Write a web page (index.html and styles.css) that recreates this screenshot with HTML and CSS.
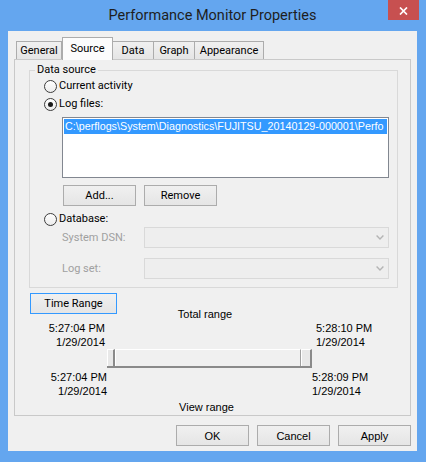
FILE: index.html
```html
<!DOCTYPE html>
<html>
<head>
<meta charset="utf-8">
<link rel="stylesheet" href="styles.css">
</head>
<body>
<div class="window">
  <div class="titlebar">
    <div class="title">Performance Monitor Properties</div>
    <div class="close">
      <svg width="9" height="8" viewBox="0 0 9 8"><path d="M1 0.5L8 7.5M8 0.5L1 7.5" stroke="#fff" stroke-width="1.7" fill="none"/></svg>
    </div>
  </div>
  <div class="client">
    <div class="tabs">
      <div class="tab tab-general">General</div>
      <div class="tab tab-active">Source</div>
      <div class="tab tab-data">Data</div>
      <div class="tab tab-graph">Graph</div>
      <div class="tab tab-appear">Appearance</div>
    </div>
    <div class="panel">
      <fieldset class="group">
        <legend>Data source</legend>
        <div class="radio-row"><span class="radio"></span><span>Current activity</span></div>
        <div class="radio-row"><span class="radio checked"></span><span>Log files:</span></div>
        <div class="listbox">
          <div class="list-item">C:\perflogs\System\Diagnostics\FUJITSU_20140129-000001\Perfo</div>
        </div>
        <div class="btn-row">
          <button class="btn">Add...</button>
          <button class="btn">Remove</button>
        </div>
        <div class="radio-row db-row"><span class="radio"></span><span>Database:</span></div>
        <div class="field-row">
          <span class="field-label">System DSN:</span>
          <div class="combo"><svg width="8" height="5" viewBox="0 0 8 5"><polyline points="0.6,0.6 4,4 7.4,0.6" stroke="#b4b4b4" stroke-width="1.4" fill="none"/></svg></div>
        </div>
        <div class="field-row logset-row">
          <span class="field-label">Log set:</span>
          <div class="combo"><svg width="8" height="5" viewBox="0 0 8 5"><polyline points="0.6,0.6 4,4 7.4,0.6" stroke="#b4b4b4" stroke-width="1.4" fill="none"/></svg></div>
        </div>
      </fieldset>
      <div class="timegrid">
        <button class="btn tr-btn">Time Range</button>
        <div class="total">Total range</div>
        <div class="t-left"><div>5:27:04 PM</div><div class="date">1/29/2014</div></div>
        <div class="t-right"><div>5:28:10 PM</div><div>1/29/2014</div></div>
        <div class="slider">
          <div class="thumb thumb-l"></div>
          <div class="track"></div>
          <div class="thumb thumb-r"></div>
        </div>
        <div class="b-left"><div>5:27:04 PM</div><div>1/29/2014</div></div>
        <div class="b-right"><div>5:28:09 PM</div><div>1/29/2014</div></div>
        <div class="view">View range</div>
      </div>
    </div>
    <div class="footer">
      <button class="btn fbtn">OK</button>
      <button class="btn fbtn">Cancel</button>
      <button class="btn fbtn">Apply</button>
    </div>
  </div>
</div>
</body>
</html>
```
FILE: styles.css
```css
* { box-sizing: border-box; }
html, body { margin: 0; padding: 0; }
body {
  width: 426px;
  height: 462px;
  overflow: hidden;
  background: #64a6ef;
  font-family: Roboto, "Liberation Sans", sans-serif;
  font-size: 11px;
  color: #000;
}
.window {
  width: 426px;
  height: 462px;
  background: #64a6ef;
  padding: 0 9px 11px 8px;
  display: flex;
  flex-direction: column;
}
.titlebar {
  height: 31px;
  flex: none;
  display: grid;
  grid-template-columns: 1fr auto 1fr;
}
.title {
  grid-column: 2;
  font-size: 14.5px;
  line-height: 31px;
  color: #1e1e1e;
  white-space: nowrap;
}
.close {
  grid-column: 3;
  justify-self: end;
  align-self: start;
  width: 31px;
  height: 20px;
  margin-right: -2px;
  background: #c75050;
  display: flex;
  align-items: center;
  justify-content: center;
}
.close svg { display: block; margin-top: 1px; }
.client {
  flex: 1;
  background: #f0f0f0;
  padding: 6px 6px 5px 6px;
  display: flex;
  flex-direction: column;
}
.tabs {
  display: flex;
  align-items: flex-end;
  height: 22px;
  flex: none;
  margin-left: 2px;
}
.tab {
  height: 18px;
  border: 1px solid #acacac;
  border-bottom: none;
  background: linear-gradient(#f0f0f0, #e5e5e5);
  display: flex;
  align-items: center;
  justify-content: center;
  line-height: 14px;
  margin-left: -1px;
  white-space: nowrap;
}
.tab-general { width: 46px; margin-left: 0; }
.tab-active {
  width: 51px;
  height: 23px;
  margin-left: 0;
  margin-bottom: -1px;
  background: #fcfcfc;
  position: relative;
  z-index: 2;
  padding-bottom: 1px;
}
.tab-data { width: 42px; }
.tab-graph { width: 42px; }
.tab-appear { width: 70px; }
.panel {
  height: 357px;
  flex: none;
  border: 1px solid #c9c9c9;
  background: #f0f0f0;
  display: flex;
  flex-direction: column;
}
.group {
  margin: 3px 12px 0 14px;
  padding: 0 0 8px 0;
  border: 1px solid #d9d9d9;
  min-width: 0;
}
.group legend {
  margin-left: 5px;
  padding: 0 2px;
  line-height: 14px;
  font-size: 11px;
}
.radio-row {
  height: 18px;
  display: flex;
  align-items: center;
  padding-left: 14px;
  gap: 2px;
  line-height: 14px;
}
.db-row { height: 17px; margin-top: 4px; padding-top: 1px; }
.radio {
  width: 13px;
  height: 13px;
  flex: none;
  border-radius: 50%;
  border: 1px solid #3c3c3c;
  background: linear-gradient(#ffffff, #ececec);
  display: flex;
  align-items: center;
  justify-content: center;
}
.radio.checked::after {
  content: "";
  width: 5px;
  height: 5px;
  border-radius: 50%;
  background: #1a1a1a;
}
.listbox {
  margin: 4px 8px 0 32px;
  height: 61px;
  border: 1px solid #828790;
  background: #fff;
  padding: 1px;
  overflow: hidden;
}
.list-item {
  height: 15px;
  line-height: 15px;
  background: #3399ff;
  color: #fff;
  font-family: "Liberation Sans", Arial, sans-serif;
  font-size: 10.75px;
  white-space: nowrap;
  overflow: hidden;
  padding-left: 1px;
}
.btn-row {
  display: flex;
  gap: 8px;
  margin: 7px 0 0 33px;
}
.btn {
  width: 73px;
  height: 21px;
  padding: 0;
  border: 1px solid #acacac;
  background: linear-gradient(#f0f0f0, #e5e5e5);
  font-family: Roboto, "Liberation Sans", sans-serif;
  font-size: 11px;
  color: #000;
  line-height: 14px;
}
.field-row {
  display: flex;
  align-items: center;
  height: 21px;
  margin-right: 8px;
  padding-left: 32px;
  line-height: 14px;
}
.logset-row { margin-top: 10px; }
.field-label {
  width: 82px;
  flex: none;
  color: #a0a0a0;
}
.combo {
  flex: 1;
  height: 21px;
  border: 1px solid #d9d9d9;
  background: #eeeeee;
  display: flex;
  align-items: center;
  justify-content: flex-end;
  padding-right: 4px;
}
.combo svg { display: block; }
.timegrid {
  margin-top: 5px;
  display: grid;
  grid-template-columns: 92px 205px 1fr;
  grid-template-rows: 28px 28px 19px 30px 16px;
  font-family: "Liberation Sans", Arial, sans-serif;
  font-size: 11px;
  line-height: 14px;
}
.tr-btn {
  grid-column: 1;
  grid-row: 1;
  align-self: start;
  justify-self: start;
  margin-left: 15px;
  width: 87px;
  border-color: #3399ff;
}
.total {
  grid-column: 2;
  grid-row: 1;
  align-self: end;
  text-align: center;
  padding-right: 9px;
  white-space: nowrap;
}
.t-left {
  grid-column: 1;
  grid-row: 2;
  text-align: right;
  padding-right: 2px;
  white-space: nowrap;
}
.t-right {
  grid-column: 3;
  grid-row: 2;
  padding-left: 4px;
  white-space: nowrap;
}
.slider {
  grid-column: 2;
  grid-row: 3;
  display: flex;
  height: 19px;
  border-bottom: 2px solid #8a8a8a;
}
.thumb {
  border-left: 1px solid #fff;
  border-top: 1px solid #fff;
  border-right: 2px solid #8a8a8a;
  background: #e8e8e8;
}
.thumb-l { width: 8px; }
.thumb-r { width: 11px; }
.track {
  flex: 1;
  border-left: 1px solid #fff;
  border-top: 1px solid #fff;
  border-right: 1px solid #a0a0a0;
  background: #f0f0f0;
}
.b-left {
  grid-column: 1;
  grid-row: 4;
  align-self: end;
  text-align: right;
  white-space: nowrap;
}
.b-right {
  grid-column: 3;
  grid-row: 4;
  align-self: end;
  white-space: nowrap;
}
.view {
  grid-column: 2;
  grid-row: 5;
  align-self: end;
  text-align: center;
  padding-right: 6px;
  white-space: nowrap;
}
.footer {
  display: flex;
  justify-content: flex-end;
  gap: 8px;
  margin-top: 9px;
}
.fbtn {
  font-family: "Liberation Sans", Arial, sans-serif;
}
```
